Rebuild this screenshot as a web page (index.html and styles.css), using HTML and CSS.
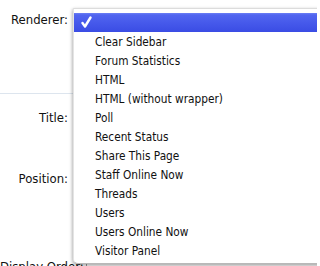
FILE: index.html
```html
<!DOCTYPE html>
<html>
<head>
<meta charset="utf-8">
<link rel="stylesheet" href="styles.css">
</head>
<body>
<div class="form">
  <div class="row row-renderer"><div class="label">Renderer:</div></div>
  <div class="divider"></div>
  <div class="row row-title"><div class="label">Title:</div></div>
  <div class="row row-position"><div class="label">Position:</div></div>
  <div class="row row-order"><div class="label">Display Order:</div><div class="field"></div></div>
</div>
<div class="menu">
  <div class="item selected"><svg class="check" width="11" height="12" viewBox="0 0 11 12"><path d="M1.5 7 L4 10.5 L9.5 1.5" fill="none" stroke="#fff" stroke-width="2.4" stroke-linecap="round" stroke-linejoin="round"/></svg></div>
  <div class="item">Clear Sidebar</div>
  <div class="item">Forum Statistics</div>
  <div class="item">HTML</div>
  <div class="item">HTML (without wrapper)</div>
  <div class="item">Poll</div>
  <div class="item">Recent Status</div>
  <div class="item">Share This Page</div>
  <div class="item">Staff Online Now</div>
  <div class="item">Threads</div>
  <div class="item">Users</div>
  <div class="item">Users Online Now</div>
  <div class="item">Visitor Panel</div>
</div>
</body>
</html>
```
FILE: styles.css
```css
html, body {
  margin: 0;
  padding: 0;
  background: #fff;
  overflow: hidden;
}
body {
  width: 317px;
  height: 266px;
  position: relative;
  font-family: "DejaVu Sans Condensed", "DejaVu Sans", sans-serif;
  color: #111;
}
.form {
  display: flex;
  flex-direction: column;
}
.row {
  display: flex;
  height: 16px;
  line-height: 16px;
  font-size: 13px;
}
.label {
  width: 68px;
  flex: none;
  text-align: right;
  white-space: nowrap;
}
.row-renderer { margin-top: 12px; }
.divider {
  margin-top: 65px;
  height: 1px;
  background: #dde5ee;
}
.row-title { margin-top: 16px; }
.row-position { margin-top: 45px; }
.row-order { margin-top: 72px; }
.field {
  margin-left: 18px;
  width: 1px;
  background: #999;
}
.menu {
  position: absolute;
  left: 73px;
  top: 8px;
  width: 270px;
  background: #fff;
  border-top: 1px solid #dcdcdc;
  border-left: 1px solid #e4e4e4;
  border-bottom: 1px solid #b8b8b8;
  border-radius: 0 0 0 5px;
  padding: 4px 0 3px;
  box-shadow: 0 2px 4px rgba(0,0,0,0.28), -1px 1px 3px rgba(0,0,0,0.12);
  font-size: 11.75px;
}
.item {
  height: 19px;
  line-height: 20px;
  padding-left: 21px;
  white-space: nowrap;
  color: #111;
}
.item.selected {
  position: relative;
  background: linear-gradient(#6c7ff4 0, #5165ef 2px, #4457ea 60%, #3a4ce4 100%);
}
.check {
  position: absolute;
  left: 7px;
  top: 3px;
}
```
